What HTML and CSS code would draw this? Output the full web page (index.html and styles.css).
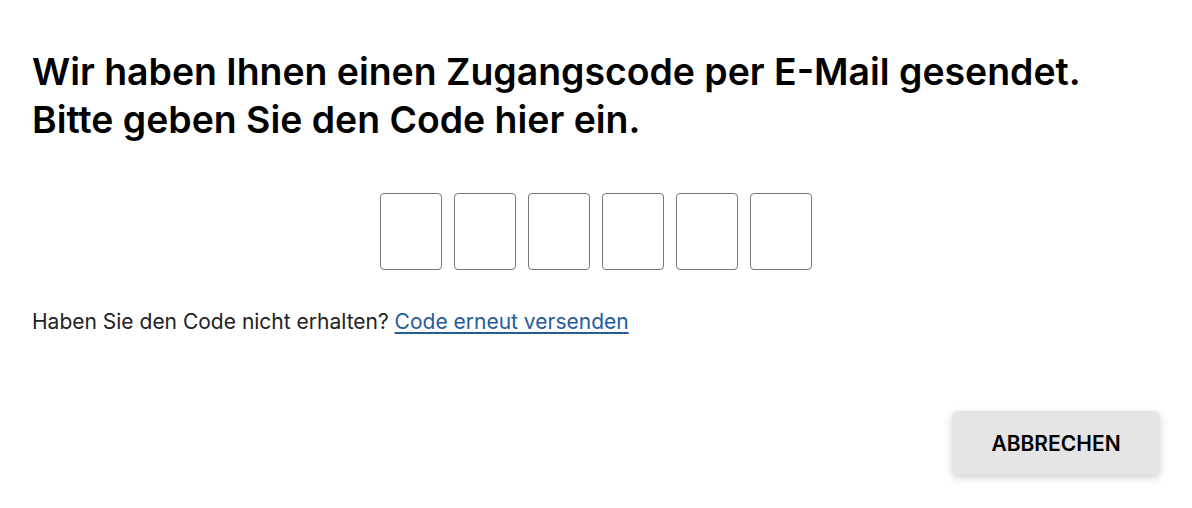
FILE: index.html
```html
<!DOCTYPE html>
<html lang="de">
<head>
<meta charset="utf-8">
<link rel="stylesheet" href="styles.css">
</head>
<body>
<main class="dialog">
  <h1 class="title">Wir haben Ihnen einen Zugangscode per E-Mail gesendet.<br>Bitte geben Sie den Code hier ein.</h1>
  <div class="code">
    <input class="digit" type="text" maxlength="1">
    <input class="digit" type="text" maxlength="1">
    <input class="digit" type="text" maxlength="1">
    <input class="digit" type="text" maxlength="1">
    <input class="digit" type="text" maxlength="1">
    <input class="digit" type="text" maxlength="1">
  </div>
  <p class="resend">Haben Sie den Code nicht erhalten? <a href="#" class="link">Code erneut versenden</a></p>
  <div class="actions">
    <button class="btn" type="button">ABBRECHEN</button>
  </div>
</main>
</body>
</html>
```
FILE: styles.css
```css
html, body {
  margin: 0;
  padding: 0;
  background: #ffffff;
}
body {
  font-family: Inter, "Noto Sans", sans-serif;
  color: #000;
}
.dialog {
  padding: 48px 32px 32px 32px;
  display: flex;
  flex-direction: column;
}
.title {
  margin: 0;
  font-size: 37.4px;
  line-height: 48px;
  font-weight: 600;
  letter-spacing: 0;
}
.code {
  display: flex;
  justify-content: center;
  gap: 12px;
  margin-top: 49px;
}
.digit {
  width: 62px;
  height: 77px;
  box-sizing: border-box;
  border: 1px solid #777;
  border-radius: 4px;
  padding: 0;
  margin: 0;
  background: #fff;
}
.resend {
  margin: 38px 0 0;
  font-size: 21px;
  line-height: 28px;
  color: #222;
}
.link {
  color: #265b9a;
  text-decoration: underline;
  text-underline-offset: 3px;
}
.actions {
  display: flex;
  justify-content: flex-end;
  margin-top: 75px;
}
.btn {
  width: 208px;
  height: 64px;
  border: none;
  border-radius: 6px;
  background: #e5e5e5;
  box-shadow: 0 3px 8px rgba(0,0,0,0.18);
  font-family: Inter, "Noto Sans", sans-serif;
  font-size: 21px;
  font-weight: 600;
  color: #000;
  cursor: pointer;
}
```
